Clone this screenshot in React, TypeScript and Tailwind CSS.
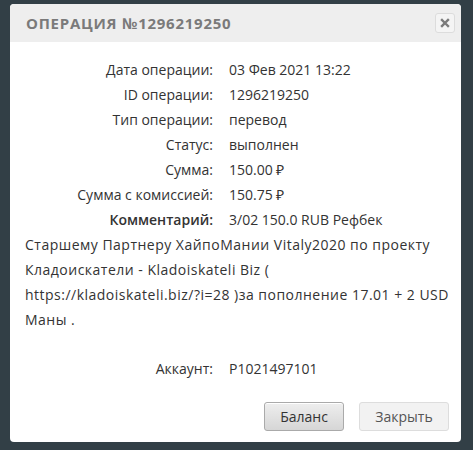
export default function App() {
  const rows: [string, string][] = [
    ['Дата операции:', '03 Фев 2021 13:22'],
    ['ID операции:', '1296219250'],
    ['Тип операции:', 'перевод'],
    ['Статус:', 'выполнен'],
    ['Сумма:', '150.00 ₽'],
    ['Сумма с комиссией:', '150.75 ₽'],
  ];

  return (
    <div
      className="min-h-[450px] w-full bg-[#323f46] px-[10px] pt-[4px] text-[14px] text-[#333]"
      style={{ fontFamily: '"Open Sans", "Liberation Sans", sans-serif' }}
    >
      <div className="w-[451px] overflow-hidden rounded-[4px] bg-white">
        {/* Header */}
        <div className="flex h-[38px] items-center justify-between bg-[#eeeeee] pl-[16px] pr-[6px]">
          <h3 className="text-[15px] font-bold uppercase tracking-[0.05em] text-[#7a7a7a]">
            Операция №1296219250
          </h3>
          <button className="flex h-[20px] w-[20px] items-center justify-center rounded-[3px] border border-[#dcdcdc] bg-[#f4f4f4] text-[#777]">
            <svg width="10" height="10" viewBox="0 0 10 10">
              <path d="M2 2L8 8M8 2L2 8" stroke="#7a7a7a" strokeWidth="2.4" strokeLinecap="square" />
            </svg>
          </button>
        </div>

        {/* Body */}
        <div className="px-[15px] pt-[15px] leading-[25px]">
          {rows.map(([label, value]) => (
            <div key={label} className="flex">
              <div className="w-[188px] shrink-0 text-right">{label}</div>
              <div className="pl-[16px]">{value}</div>
            </div>
          ))}
          <p className="whitespace-nowrap">
            <span className="inline-block w-[188px] text-right font-semibold">Комментарий:</span>
            <span className="pl-[16px]">3/02 150.0 RUB Рефбек</span>
            <br />
            <span className="tracking-[0.035em]">Старшему Партнеру ХайпоМании Vitaly2020 по проекту</span>
            <br />
            <span className="tracking-[0.035em]">Кладоискатели - Kladoiskateli Biz (</span>
            <br />
            <span className="tracking-[0.035em]">https://kladoiskateli.biz/?i=28 )за пополнение 17.01 + 2 USD</span>
            <br />
            <span className="tracking-[0.035em]">Маны .</span>
          </p>
          <div className="mt-[24px] flex">
            <div className="w-[188px] shrink-0 text-right">Аккаунт:</div>
            <div className="pl-[16px]">P1021497101</div>
          </div>
        </div>

        {/* Footer */}
        <div className="flex justify-end gap-[15px] px-[12px] pb-[11px] pt-[21px]">
          <button className="h-[29px] w-[80px] rounded-[3px] border border-[#aaa] bg-gradient-to-b from-[#eeeeee] to-[#d6d6d6] text-[14px] text-[#333] shadow-[inset_0_1px_0_#fff]">
            Баланс
          </button>
          <button className="h-[29px] w-[90px] rounded-[3px] border border-[#ddd] bg-[#f2f2f2] text-[14px] text-[#555]">
            Закрыть
          </button>
        </div>
      </div>
    </div>
  );
}
